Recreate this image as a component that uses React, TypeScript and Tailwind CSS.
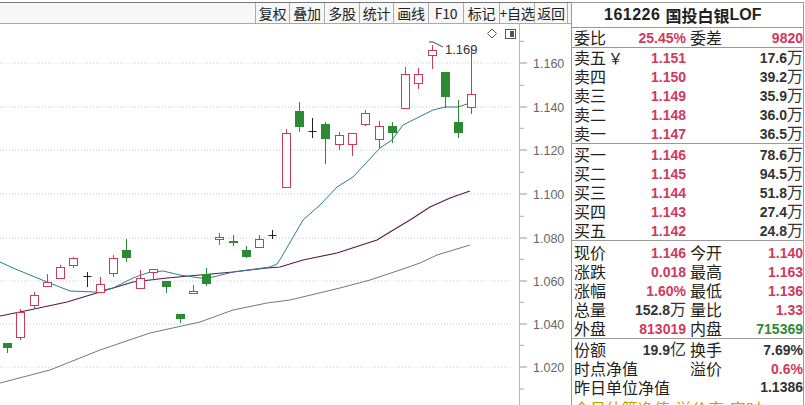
import React from "react"

type Candle = [number, number, number, number, "r" | "g" | "k"]

// [bodyTop, bodyBottom, wickTop, wickBottom, tone] — y in page pixels
const candles: Candle[] = [
  [343, 347, 343, 353, "g"],
  [312, 337, 309, 340, "r"],
  [295, 305, 292, 308, "r"],
  [282, 286, 274, 286, "r"],
  [267, 278, 265, 279, "r"],
  [258, 265, 257, 268, "r"],
  [276, 276, 272, 287, "k"],
  [284, 292, 277, 293, "r"],
  [258, 273, 255, 277, "r"],
  [250, 257, 239, 262, "g"],
  [278, 288, 270, 288, "r"],
  [269, 272, 269, 280, "r"],
  [281, 286, 281, 293, "g"],
  [314, 318, 314, 323, "g"],
  [291, 293, 285, 293, "r"],
  [274, 283, 268, 286, "g"],
  [237, 239, 233, 245, "r"],
  [241, 242, 235, 246, "g"],
  [250, 256, 246, 258, "g"],
  [239, 247, 235, 247, "r"],
  [235, 235, 230, 239, "k"],
  [133, 187, 129, 187, "r"],
  [111, 126, 102, 132, "g"],
  [131, 131, 118, 138, "k"],
  [124, 138, 122, 164, "g"],
  [135, 144, 132, 150, "r"],
  [133, 144, 133, 156, "r"],
  [113, 124, 110, 126, "r"],
  [126, 139, 121, 148, "r"],
  [126, 132, 122, 143, "g"],
  [74, 108, 67, 108, "r"],
  [74, 83, 68, 89, "r"],
  [50, 55, 45, 69, "r"],
  [72, 96, 72, 108, "g"],
  [122, 132, 100, 138, "g"],
  [94, 107, 48, 114, "r"],
]

const ma5 = "0,262 13,268 47,282 70,291 95,292 113,288 133,278 150,272 163,271 180,275 200,278 213,277 233,272 263,268 270,267 277,264 281,258 303,220 320,205 337,187 353,177 380,148 392,140 403,125 417,118 433,110 445,107 458,107 470,103"
const ma10 = "0,316 20,312 67,302 100,292 133,282 167,278 200,275 233,272 267,268 280,267 303,260 337,253 377,240 390,232 410,220 430,207 450,198 470,191"
const ma20 = "0,383 50,370 100,350 150,333 200,322 233,310 267,303 290,300 340,288 370,280 400,270 420,263 437,255 470,245"

const levels = [
  { y: 63, label: "1.160" },
  { y: 107, label: "1.140" },
  { y: 150, label: "1.120" },
  { y: 194, label: "1.100" },
  { y: 238, label: "1.080" },
  { y: 281, label: "1.060" },
  { y: 324, label: "1.040" },
  { y: 367, label: "1.020" },
]

const tools = [
  { t: "复权", w: 34 },
  { t: "叠加", w: 35 },
  { t: "多股", w: 35 },
  { t: "统计", w: 34 },
  { t: "画线", w: 35 },
  { t: "F10", w: 35 },
  { t: "标记", w: 36 },
  { t: "+自选", w: 35 },
  { t: "返回", w: 33 },
]

const RED = "#d03a5a"
const GREEN = "#2c8a34"

function Chart() {
  return (
    <svg width={571} height={381} viewBox="0 24 571 381" className="block">
      {levels.map((l) => (
        <g key={l.label}>
          <line x1={0} x2={513} y1={l.y} y2={l.y} stroke="#c8c8c8" strokeDasharray="1 2" />
          <line x1={520} x2={527} y1={l.y} y2={l.y} stroke="#999" />
          <line x1={520} x2={524} y1={l.y - 21.7} y2={l.y - 21.7} stroke="#aaa" />
          <text x={533} y={l.y + 4.5} fontSize={12.5} fill="#666" fontFamily="Liberation Sans, Arial, sans-serif">
            {l.label}
          </text>
        </g>
      ))}
      <line x1={520} x2={524} y1={389} y2={389} stroke="#aaa" />
      <line x1={519.5} x2={519.5} y1={24} y2={405} stroke="#bbb" />

      <polyline points={ma20} fill="none" stroke="#777" strokeWidth={1} />
      <polyline points={ma10} fill="none" stroke="#5a1648" strokeWidth={1.1} />
      <polyline points={ma5} fill="none" stroke="#2a7f92" strokeWidth={1} />

      {candles.map(([bt, bb, wt, wb, tone], i) => {
        const x = Math.round(7 + i * 13.27) + 0.5
        if (tone === "k") {
          return (
            <g key={i} stroke="#222">
              <line x1={x} x2={x} y1={wt} y2={wb} />
              <line x1={x - 4} x2={x + 4} y1={bt + 0.5} y2={bt + 0.5} />
            </g>
          )
        }
        const c = tone === "r" ? RED : GREEN
        const h = Math.max(bb - bt, 1)
        return (
          <g key={i}>
            <line x1={x} x2={x} y1={wt} y2={wb} stroke={c} />
            {tone === "r" ? (
              <rect x={x - 4} y={bt + 0.5} width={8} height={h} fill="#fff" stroke={c} />
            ) : (
              <rect x={x - 4.5} y={bt} width={9} height={h + 1} fill={c} />
            )}
          </g>
        )
      })}

      {/* high marker */}
      <polyline points="429,42 433,42 443,47" fill="none" stroke="#444" strokeWidth={1} />
      <text x={445} y={54} fontSize={13} fill="#333" fontFamily="Liberation Sans, Arial, sans-serif">
        1.169
      </text>

      {/* corner icons */}
      <path d="M492 29 L496.5 33.5 L492 38 L487.5 33.5 Z" fill="none" stroke="#555" />
      <rect x={505.5} y={29.5} width={10} height={9} fill="#fff" stroke="#555" />
      <rect x={510} y={31} width={4} height={6} fill="#555" />
    </svg>
  )
}

function Val({ children, tone = "k" }: { children: React.ReactNode; tone?: "r" | "g" | "k" }) {
  const color = tone === "r" ? "text-[#d03a5a]" : tone === "g" ? "text-[#2c8a34]" : "text-[#333]"
  return (
    <span className={`font-['Liberation_Sans',Arial,sans-serif] text-[14px] font-bold ${color}`}>{children}</span>
  )
}

function Unit({ children }: { children: React.ReactNode }) {
  return <span className="text-[16px] font-normal text-[#333]">{children}</span>
}

function Row({
  label,
  value,
  label2,
  value2,
}: {
  label: React.ReactNode
  value?: React.ReactNode
  label2?: React.ReactNode
  value2?: React.ReactNode
}) {
  return (
    <div className="flex h-[19px] items-center leading-[19px]">
      <div className="flex w-[116px] items-center justify-between pl-[2px] pr-[2px]">
        <span className="whitespace-nowrap">{label}</span>
        <span className="whitespace-nowrap">{value}</span>
      </div>
      <div className="flex flex-1 items-center justify-between pl-[2px]">
        <span className="whitespace-nowrap">{label2}</span>
        <span className="whitespace-nowrap">{value2}</span>
      </div>
    </div>
  )
}

export default function App() {
  const asks = [
    ["卖五", "1.151", "17.6"],
    ["卖四", "1.150", "39.2"],
    ["卖三", "1.149", "35.9"],
    ["卖二", "1.148", "36.0"],
    ["卖一", "1.147", "36.5"],
  ]
  const bids = [
    ["买一", "1.146", "78.6"],
    ["买二", "1.145", "94.5"],
    ["买三", "1.144", "51.8"],
    ["买四", "1.143", "27.4"],
    ["买五", "1.142", "24.8"],
  ]

  return (
    <div className="flex h-[405px] w-[805px] overflow-hidden bg-white font-['Noto_Sans_CJK_SC',sans-serif] text-[16px] text-[#222]">
      <div className="flex w-[571px] flex-col">
        <div className="mt-[2px] flex h-[22px] border-t border-b border-t-[#777] border-b-[#aaa] bg-[#f7f7f7]">
          <div className="w-[255px]" />
          {tools.map((b) => (
            <div
              key={b.t}
              style={{ width: b.w }}
              className="flex items-center justify-center whitespace-nowrap border-l border-[#aaa] text-[14px] leading-none tracking-[-0.3px] text-[#222]"
            >
              {b.t}
            </div>
          ))}
          <div className="border-l border-[#aaa]" />
        </div>
        <Chart />
      </div>

      <div className="mt-[2px] flex w-[233px] flex-col border-t border-r border-l border-[#999]">
        <div className="flex h-[26px] items-center border-b border-[#999] pl-[32px] text-[16px] font-bold text-[#222]">
          <span className="font-['Liberation_Sans',Arial,sans-serif] tracking-[0.5px]">161226</span>
          <span className="ml-[5px]">国投白银</span>
          <span className="font-['Liberation_Sans',Arial,sans-serif]">LOF</span>
        </div>
        <div className="border-b border-[#999]">
          <Row label="委比" value={<Val tone="r">25.45%</Val>} label2="委差" value2={<Val tone="r">9820</Val>} />
        </div>
        <div className="border-b border-[#999]">
          {asks.map(([l, p, v], i) => (
            <Row
              key={l}
              label={
                <>
                  {l}
                  {i === 0 && <span className="ml-[2px] text-[15px]">￥</span>}
                </>
              }
              value={<Val tone="r">{p}</Val>}
              value2={
                <>
                  <Val>{v}</Val>
                  <Unit>万</Unit>
                </>
              }
            />
          ))}
        </div>
        <div className="border-b border-[#999] pt-[1px]">
          {bids.map(([l, p, v]) => (
            <Row
              key={l}
              label={l}
              value={<Val tone="r">{p}</Val>}
              value2={
                <>
                  <Val>{v}</Val>
                  <Unit>万</Unit>
                </>
              }
            />
          ))}
        </div>
        <div className="border-b border-[#999] pt-[2px]">
          <Row label="现价" value={<Val tone="r">1.146</Val>} label2="今开" value2={<Val tone="r">1.140</Val>} />
          <Row label="涨跌" value={<Val tone="r">0.018</Val>} label2="最高" value2={<Val tone="r">1.163</Val>} />
          <Row label="涨幅" value={<Val tone="r">1.60%</Val>} label2="最低" value2={<Val tone="r">1.136</Val>} />
          <Row
            label="总量"
            value={
              <>
                <Val>152.8</Val>
                <Unit>万</Unit>
              </>
            }
            label2="量比"
            value2={<Val tone="r">1.33</Val>}
          />
          <Row label="外盘" value={<Val tone="r">813019</Val>} label2="内盘" value2={<Val tone="g">715369</Val>} />
        </div>
        <div className="pt-[1px]">
          <Row
            label="份额"
            value={
              <>
                <Val>19.9</Val>
                <Unit>亿</Unit>
              </>
            }
            label2="换手"
            value2={<Val>7.69%</Val>}
          />
          <Row label="时点净值" label2="溢价" value2={<Val tone="r">0.6%</Val>} />
          <div className="flex h-[19px] items-center justify-between pl-[2px] leading-[19px]">
            <span>昨日单位净值</span>
            <Val>1.1386</Val>
          </div>
          <div className="mt-[2px] flex gap-[6px] pl-[2px] text-[16px] leading-[19px] text-[#c0a800]">
            <span>今日估算净值</span>
            <span>溢价率</span>
            <span>实时</span>
          </div>
        </div>
      </div>
    </div>
  )
}
